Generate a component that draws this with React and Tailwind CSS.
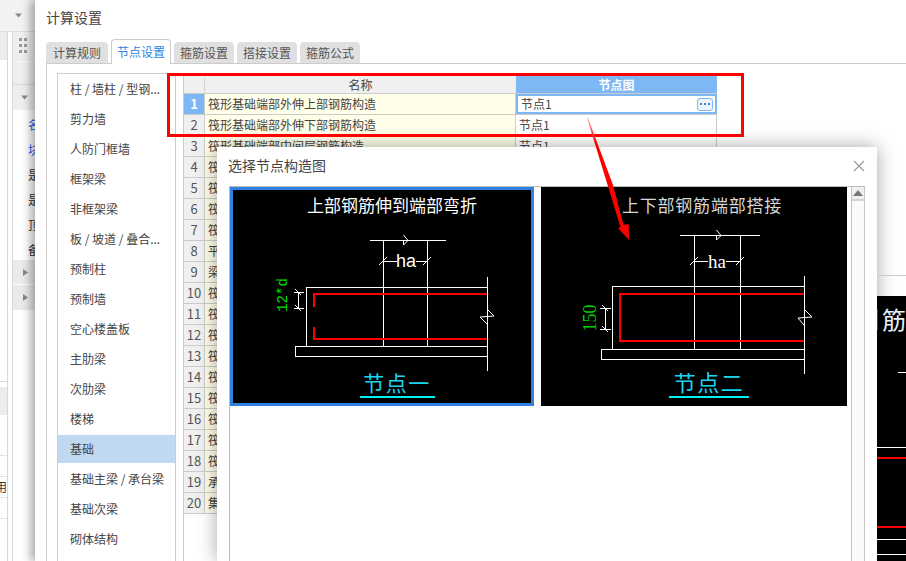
import React from 'react'

const tabs = ['计算规则', '节点设置', '箍筋设置', '搭接设置', '箍筋公式']

const categories = [
  '柱 / 墙柱 / 型钢...', '剪力墙', '人防门框墙', '框架梁', '非框架梁', '板 / 坡道 / 叠合...',
  '预制柱', '预制墙', '空心楼盖板', '主肋梁', '次肋梁', '楼梯', '基础',
  '基础主梁 / 承台梁', '基础次梁', '砌体结构',
]

const rows = [
  '筏形基础端部外伸上部钢筋构造', '筏形基础端部外伸下部钢筋构造', '筏形基础端部中间层钢筋构造',
  '筏形基础板边缘封边构造', '筏形基础变截面钢筋构造', '筏形基础跨中钢筋构造', '筏形基础马凳筋构造',
  '平板筏基柱下板带构造', '梁板式筏基基础梁构造', '筏形基础无外伸构造', '筏形基础高差构造',
  '筏形基础顶部贯通筋构造', '筏形基础底部贯通筋构造', '筏形基础附加钢筋构造', '筏形基础洞口构造',
  '筏形基础后浇带构造', '筏形基础上柱墩构造', '筏形基础下柱墩构造', '承台钢筋构造', '集水坑钢筋构造',
]

const sideItems = [
  ['名', 'text-[#2563eb]'], ['块', 'text-[#2563eb]'], ['是', 'text-[#333]'],
  ['是', 'text-[#333]'], ['顶', 'text-[#333]'], ['备', 'text-[#333]'],
]

const Caret = ({ side }) => (
  <svg width="7" height="7" viewBox="0 0 7 7" className="fill-[#888]">
    {side ? <path d="M1 0 L6 3.5 L1 7 Z" /> : <path d="M0 1.5 H7 L3.5 5.5 Z" />}
  </svg>
)

// strip of the window lying behind the settings dialog
const BackStrip = () => (
  <div className="w-[35px] shrink-0 flex flex-col overflow-hidden bg-white">
    <div className="h-[32px] flex items-center pl-[15px] bg-[#f2f2f2] border-b border-[#ddd]">
      <Caret />
    </div>
    <div className="flex flex-1">
      <div className="w-[8px] border-r border-[#d8d8d8] flex flex-col overflow-hidden">
        <div className="h-[28px] bg-[#ececef]" />
        <div className="h-[322px] border-b border-[#d8d8d8]" />
        <div className="h-[5px]" />
        <div className="h-[28px] bg-[#ececef]" />
        <div className="h-[41px] border-b border-[#e2e2e2]" />
        <div className="h-[21px] border-b border-[#e2e2e2]" />
        <div className="h-[21px] border-b border-[#e2e2e2] flex items-center justify-end text-[12px] text-[#333]">
          <span className="shrink-0">用</span>
        </div>
        <div className="h-[21px] border-b border-[#e2e2e2]" />
      </div>
      <div className="ml-[4px] flex-1 border-l border-[#d8d8d8] flex flex-col overflow-hidden">
        <div className="h-[30px] bg-[#eeeeee] border-b border-[#fafafa] pl-[6px] pt-[6px]">
          <div className="grid grid-cols-[3px_3px] gap-x-[2px] gap-y-[3px]">
            {[0, 1, 2, 3, 4, 5].map((d) => (
              <div key={d} className="w-[3px] h-[3px] bg-[#999]" />
            ))}
          </div>
        </div>
        <div className="h-[23px] bg-[#eeeeee] border-b border-[#d8d8d8]" />
        <div className="h-[25px] bg-[#eeeeee] flex items-center pl-[8px]">
          <Caret />
        </div>
        <div className="h-[150px] pt-[2px] pl-[15px]">
          {sideItems.map(([t, c], i) => (
            <div key={i} className={`h-[25px] flex items-center text-[12px] ${c}`}>
              <span className="shrink-0">{t}</span>
            </div>
          ))}
        </div>
        <div className="h-[25px] bg-[#eaeaea] border-b border-white flex items-center pl-[9px]">
          <Caret side />
        </div>
        <div className="h-[25px] bg-[#eaeaea] flex items-center pl-[9px]">
          <Caret side />
        </div>
      </div>
    </div>
  </div>
)

const Tab = ({ label, active }) => (
  <div
    className={
      active
        ? 'w-[60px] h-[25px] bg-white border border-b-0 border-[#ccc] rounded-t-[4px] flex items-center justify-center text-[12px] text-[#2b86e6] relative top-px'
        : 'w-[60px] first:w-[62px] h-[21px] bg-[#e0e0e0] rounded-t-[4px] flex items-center justify-center text-[12px] text-[#555]'
    }
  >
    {label}
  </div>
)

const CategoryList = () => (
  <div className="w-[119px] shrink-0 border-l border-r border-t border-[#ccc] bg-white">
    {categories.map((c) => (
      <div key={c} className="h-[30px] py-px">
        <div className={`h-full flex items-center pl-[12px] text-[12px] text-[#444] whitespace-nowrap ${c === '基础' ? 'bg-[#c1d9f0]' : ''}`}>
          {c}
        </div>
      </div>
    ))}
  </div>
)

const NodeTable = () => (
  <div className="ml-[7px] w-[534px] shrink-0 border-l border-[#ccc] pt-px text-[12px] text-[#444]">
    <div className="flex h-[20px] pt-[3px] border-b border-[#ccc] bg-[#f0f0f0]">
      <div className="w-[21px] border-r border-[#d4d4d4]" />
      <div className="w-[311px] flex items-center justify-center">名称</div>
      <div className="w-[201px] -mt-[3px] bg-[#7db7f6] flex items-center justify-center font-bold text-white pt-[3px]">节点图</div>
    </div>
    {rows.map((name, i) => (
      <div key={i} className="flex h-[21px] border-b border-[#ccc]">
        <div className={`w-[21px] border-r border-[#ccc] flex items-center justify-center text-[13px] ${i === 0 ? 'bg-[#7db7f6] text-white font-bold' : 'bg-[#f0f0f0] text-[#555]'}`}>
          {i + 1}
        </div>
        <div className="w-[311px] bg-[#fffee9] border-r border-[#ccc] flex items-center pl-[3px] whitespace-nowrap overflow-hidden">
          {name}
        </div>
        {i === 0 ? (
          <div className="w-[201px] bg-white border-2 border-[#7db7f6] flex items-center justify-between pl-[3px] pr-[2px]">
            <span>节点1</span>
            <div className="w-[16px] h-[13px] rounded-[3px] border border-[#7db7f6] bg-[#eef5fd] flex items-center justify-center gap-[2px]">
              <div className="w-[2px] h-[2px] bg-[#3d86dc]" />
              <div className="w-[2px] h-[2px] bg-[#3d86dc]" />
              <div className="w-[2px] h-[2px] bg-[#3d86dc]" />
            </div>
          </div>
        ) : (
          <div className="w-[201px] bg-white border-r border-[#ccc] flex items-center pl-[3px]">节点1</div>
        )}
      </div>
    ))}
  </div>
)

const cad = { fill: 'none', stroke: '#fff', strokeWidth: 1, shapeRendering: 'crispEdges' }
const rebar = { fill: 'none', stroke: '#f00', strokeWidth: 2, shapeRendering: 'crispEdges' }

const DiagramOne = () => (
  <div className="w-[304px] h-[219px] shrink-0 bg-black border-[3px] border-[#2f82e0]">
    <svg width="298" height="213" viewBox="233 190 298 213" className="block">
      <text x="392" y="212" textAnchor="middle" fontSize="17" fill="#fff" fontFamily="Noto Sans CJK SC, sans-serif">上部钢筋伸到端部弯折</text>
      <g {...cad}>
        <path d="M370 240.5 H446 M383.5 240 V346 M427.5 240 V346" />
        <path d="M306.5 287.5 H487.5 M306.5 287 V346 M295.5 346.5 H487.5 M295.5 346 V356.5 H487.5 M487.5 277 V371" />
        <path d="M383 261.5 H397 M416 261.5 H428 M298.5 292 V308 M294 292.5 H304 M294 308.5 H304" />
      </g>
      <g fill="none" stroke="#fff" strokeWidth="1">
        <path d="M379 265 L387 257 M423 265 L431 257 M295 289 L301 295 M295 305 L301 311" />
        <path d="M403.5 235 L408 240.5 L403.5 245 V240" />
        <path d="M487 309 L494 316 L480 317 L487 324" />
      </g>
      <text x="406" y="267" textAnchor="middle" fontSize="18" fill="#fff" fontFamily="Liberation Sans, sans-serif">ha</text>
      <text x="282" y="300" textAnchor="middle" fontSize="14" fill="#00e000" fontFamily="Liberation Mono, monospace" transform="rotate(-90 282 295)">12*d</text>
      <path {...rebar} d="M487 294 H314 V307 M314 327 V339 H487" />
      <text x="397" y="391" textAnchor="middle" fontSize="21" fill="#19d5ee" letterSpacing="1.5" fontFamily="Noto Sans CJK SC, sans-serif">节点一</text>
      <path d="M360 397 H435" stroke="#00f0f0" strokeWidth="2" shapeRendering="crispEdges" />
    </svg>
  </div>
)

const DiagramTwo = () => (
  <div className="w-[306px] h-[219px] shrink-0 bg-black">
    <svg width="306" height="219" viewBox="541 187 306 219" className="block">
      <text x="702" y="212" textAnchor="middle" fontSize="17" fill="#d6d6d6" fontFamily="Noto Sans CJK SC, sans-serif" letterSpacing="0.8">上下部钢筋端部搭接</text>
      <g {...cad}>
        <path d="M680 235.5 H760 M694.5 235 V349 M740.5 235 V349" />
        <path d="M612.5 286.5 H804.5 M612.5 286 V349 M601.5 349.5 H804.5 M601.5 349 V359.5 H804.5 M804.5 276 V374" />
        <path d="M694 261.5 H708 M726 261.5 H741 M605.5 308 V329 M600 308.5 H611 M600 329.5 H611" />
      </g>
      <g fill="none" stroke="#fff" strokeWidth="1">
        <path d="M690 265 L698 257 M736 265 L744 257 M602 305 L608 311 M602 326 L608 332" />
        <path d="M716.5 230 L721 235.5 L716.5 240 V235" />
        <path d="M804 309 L812 317 L798 318 L804 325" />
      </g>
      <text x="717" y="268" textAnchor="middle" fontSize="19" fill="#fff" fontFamily="Liberation Serif, serif">ha</text>
      <text x="590" y="324" textAnchor="middle" fontSize="18" fill="#00d000" fontFamily="Liberation Serif, serif" transform="rotate(-90 590 318)">150</text>
      <path {...rebar} d="M804 294 H620 V341 H804" />
      <text x="709" y="391" textAnchor="middle" fontSize="22" fill="#19d5ee" letterSpacing="1.5" fontFamily="Noto Sans CJK SC, sans-serif">节点二</text>
      <path d="M669 397 H749" stroke="#00f0f0" strokeWidth="2" shapeRendering="crispEdges" />
    </svg>
  </div>
)

const SelectDialog = () => (
  <div className="absolute left-[217px] top-[147px] w-[660px] h-[414px] bg-white border-t border-l border-white shadow-[0_0_18px_rgba(0,0,0,0.35)] flex flex-col">
    <div className="h-[38px] shrink-0 flex items-center justify-between pl-[10px] pr-[12px] pb-[3px] text-[14px] text-[#444]">
      <span>选择节点构造图</span>
      <svg width="12" height="12" viewBox="0 0 12 12" stroke="#999" strokeWidth="1.1" fill="none">
        <path d="M1 1 L11 11 M11 1 L1 11" />
      </svg>
    </div>
    <div className="flex-1 ml-[11px] w-[636px] border-l border-t border-[#bbb] flex overflow-hidden">
      <div className="w-[621px] flex items-start gap-[7px]">
        <DiagramOne />
        <DiagramTwo />
      </div>
      <div className="w-[14px] bg-[#fafafa] border-l border-r border-[#c4c4c4]">
        <div className="h-[14px] bg-[#f0f0f0] border-b-2 border-[#d4d4d4] flex items-center justify-center">
          <svg width="10" height="6" viewBox="0 0 10 6" className="fill-[#777]">
            <path d="M5 0 L10 6 H0 Z" />
          </svg>
        </div>
      </div>
    </div>
  </div>
)

// bit of another drawing showing to the right of the dialog
const BehindPicture = () => (
  <div className="absolute left-[877px] top-[275px] w-[29px] h-[286px] border-t border-[#ccc] pt-[20px]">
    <div className="h-[265px] bg-black">
      <svg width="29" height="265" viewBox="877 296 29 265" className="block">
        <text x="882" y="329" fontSize="24" fill="#e8f0f8" fontFamily="Noto Sans CJK SC, sans-serif">筋</text>
        <path d="M877 309 V330" stroke="#b87b2c" strokeWidth="1" />
        <path d="M898 372.5 H906 M877 447.5 H906 M877 539.5 H906 M877 554.5 H906" stroke="#fff" shapeRendering="crispEdges" />
        <path d="M877 458 H906 M877 527 H906" stroke="#f00" strokeWidth="2" shapeRendering="crispEdges" />
      </svg>
    </div>
  </div>
)

const Annotations = () => (
  <>
    <div className="absolute left-[167px] top-[73px] w-[577px] h-[64px] border-[3px] border-[#f00]" />
    <svg width="906" height="561" className="absolute left-0 top-0 pointer-events-none">
      <defs>
        <linearGradient id="arrowFade" x1="0" y1="0" x2="0" y2="1">
          <stop offset="0" stopColor="#ffb0b0" />
          <stop offset="0.2" stopColor="#f00" />
        </linearGradient>
      </defs>
      <polygon points="587,118 588,118 613,185 623.5,225 628.7,224 629,240 618,228 620.5,227" fill="url(#arrowFade)" />
    </svg>
  </>
)

const App = () => {
  return (
    <div className="relative w-[906px] h-[561px] overflow-hidden flex bg-white font-['Noto_Sans_CJK_SC','Liberation_Sans',sans-serif]">
      <BackStrip />
      <div className="relative flex-1 flex flex-col bg-white shadow-[-5px_0_8px_rgba(0,0,0,0.3)]">
        <div className="h-[38px] shrink-0 flex items-center pl-[11px] pb-[3px] text-[14px] text-[#444]">计算设置</div>
        <div className="h-[25px] shrink-0 flex items-end gap-[3px] pl-[11px]">
          {tabs.map((t) => (
            <Tab key={t} label={t} active={t === '节点设置'} />
          ))}
        </div>
        <div className="flex-1 ml-[11px] border-l border-t border-[#ccc] pl-[10px] pt-[9px] flex min-h-0 overflow-hidden">
          <CategoryList />
          <NodeTable />
        </div>
      </div>
      <SelectDialog />
      <BehindPicture />
      <Annotations />
    </div>
  )
}

export default App
